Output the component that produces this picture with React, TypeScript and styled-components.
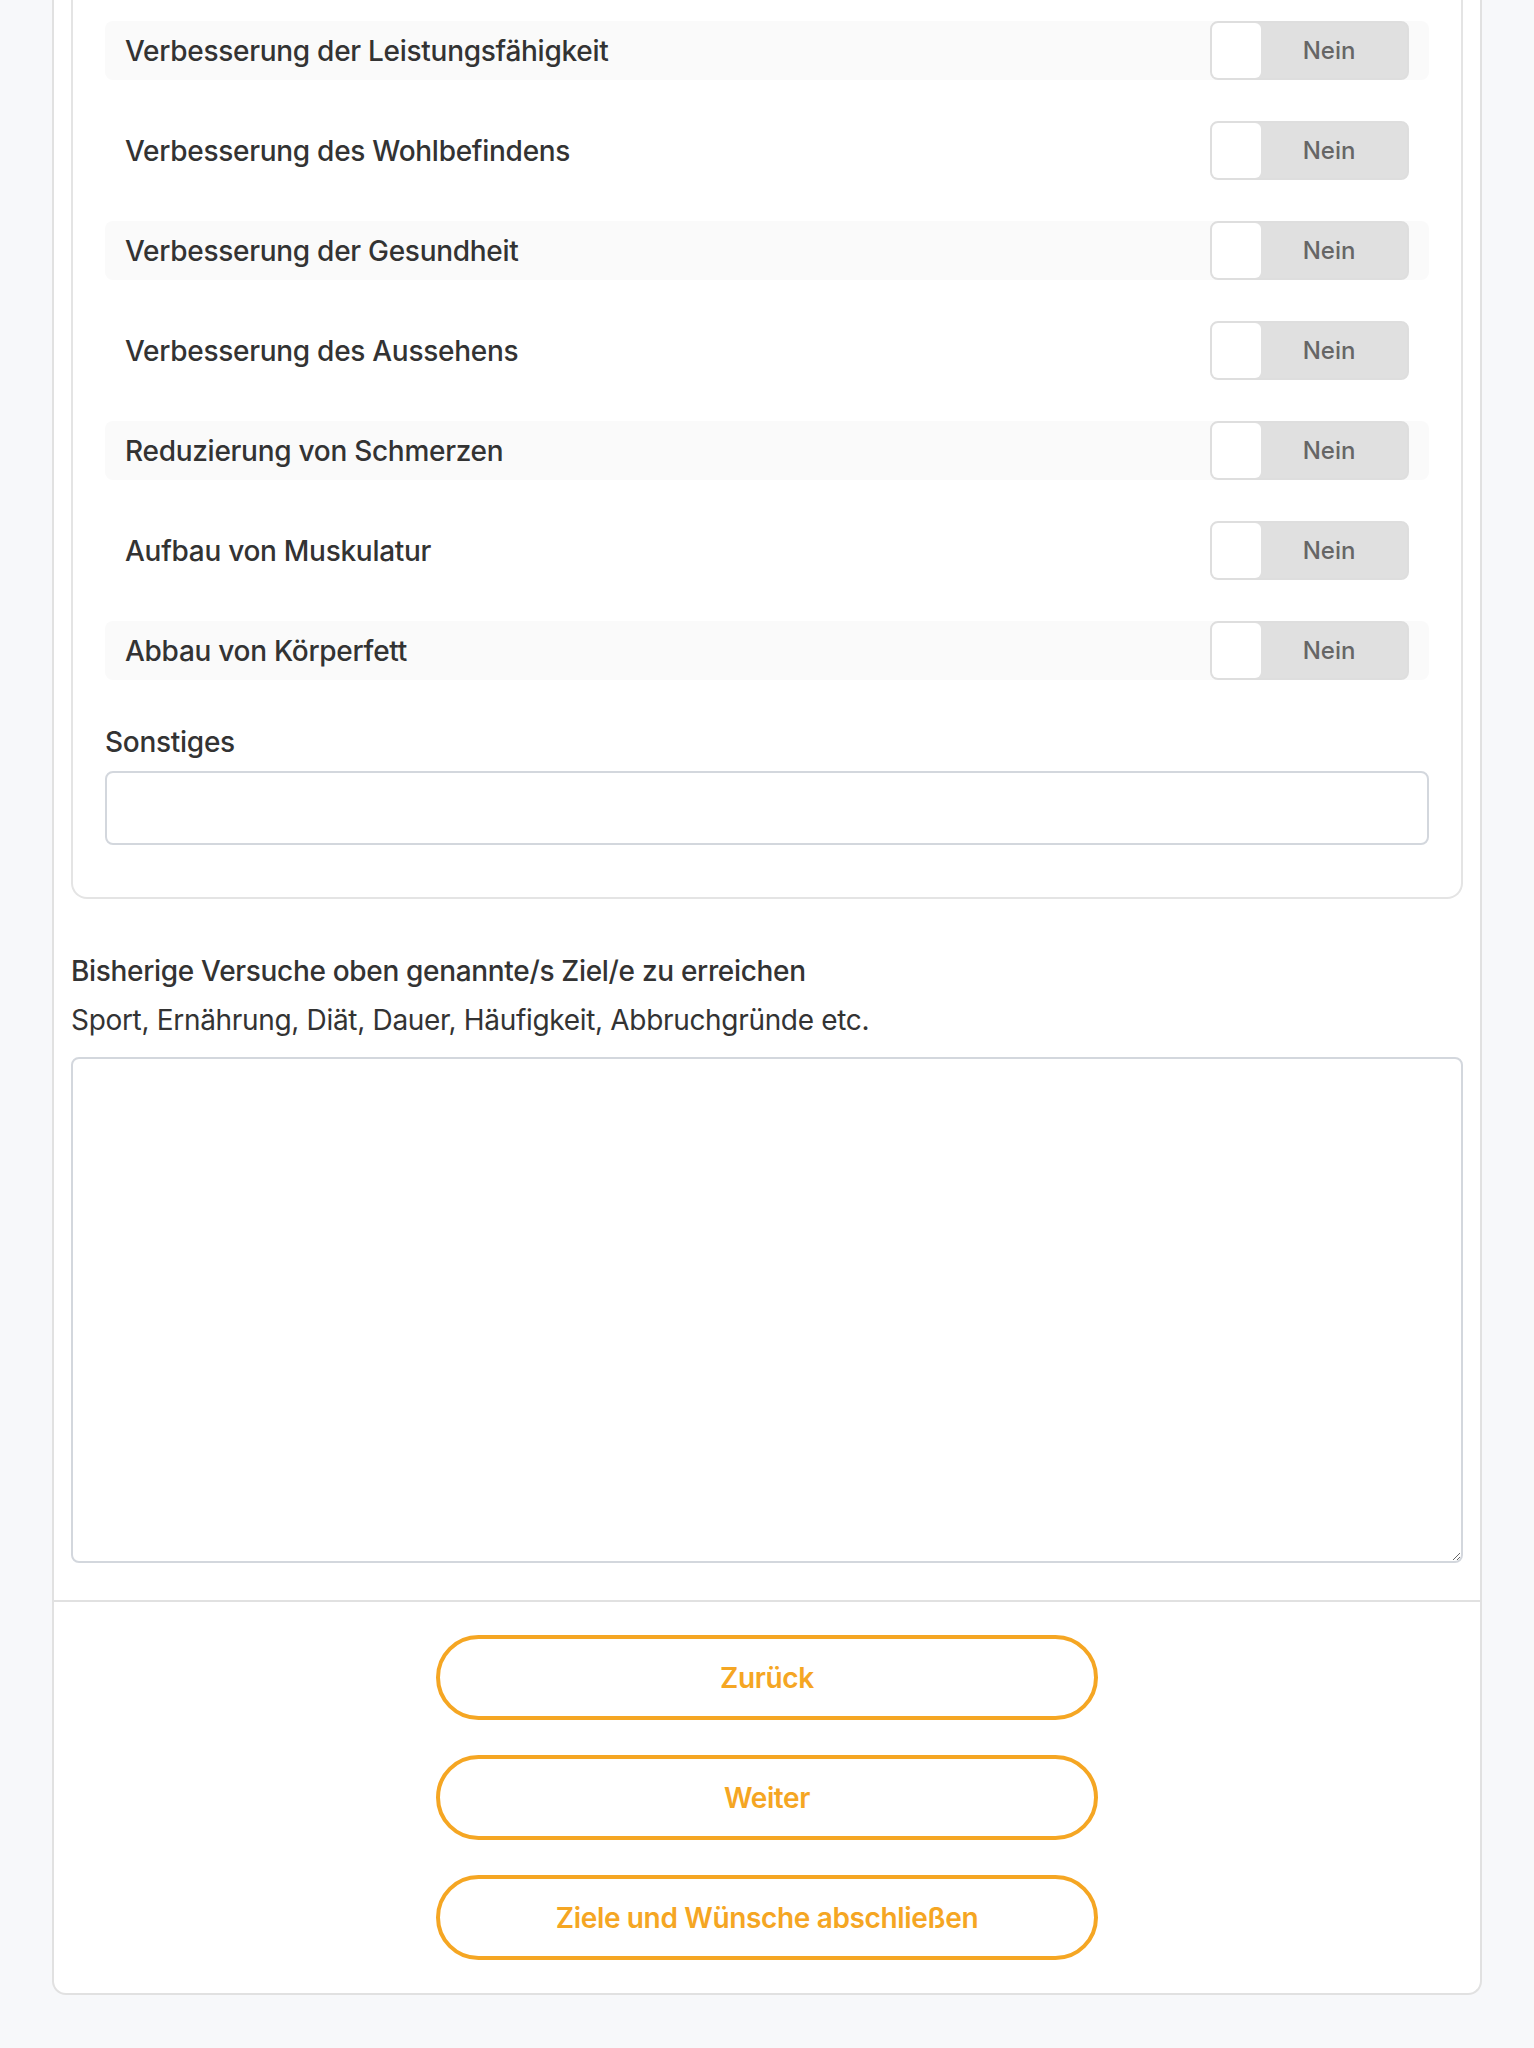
import React from 'react'
import styled, { createGlobalStyle } from 'styled-components'

interface IGoal {
  id: string
  label: string
}

const goals: IGoal[] = [
  { id: 'leistung', label: 'Verbesserung der Leistungsfähigkeit' },
  { id: 'wohlbefinden', label: 'Verbesserung des Wohlbefindens' },
  { id: 'gesundheit', label: 'Verbesserung der Gesundheit' },
  { id: 'aussehen', label: 'Verbesserung des Aussehens' },
  { id: 'schmerzen', label: 'Reduzierung von Schmerzen' },
  { id: 'muskulatur', label: 'Aufbau von Muskulatur' },
  { id: 'koerperfett', label: 'Abbau von Körperfett' }
]

const GlobalStyle = createGlobalStyle`
  * {
    box-sizing: border-box;
  }

  body {
    margin: 0;
    background: #f7f8fa;
    font-family: Inter, 'Noto Sans', 'Liberation Sans', sans-serif;
    color: #333;
  }
`

const Page = styled.div`
  padding: 0 52px 53px;
`

const Panel = styled.div`
  background: #fff;
  border: 2px solid #e1e1e1;
  border-top: none;
  border-radius: 0 0 14px 14px;
`

const PanelBody = styled.div`
  padding: 0 17px 37px;
`

const GoalsCard = styled.div`
  border: 2px solid #e4e4e4;
  border-top: none;
  border-radius: 0 0 16px 16px;
  padding: 21px 32px 52px;
`

const GoalList = styled.ul`
  display: flex;
  flex-direction: column;
  gap: 41px;
  margin: 0;
  padding: 0;
  list-style: none;
`

const GoalRow = styled.li<{ $shaded: boolean }>`
  display: flex;
  align-items: center;
  justify-content: space-between;
  height: 59px;
  padding: 0 20px;
  border-radius: 8px;
  background: ${({ $shaded }) => ($shaded ? '#fafafa' : 'transparent')};
`

const GoalLabel = styled.span`
  font-size: 28px;
  font-weight: 500;
  letter-spacing: -0.28px;
  color: #333;
`

const Toggle = styled.button`
  display: flex;
  width: 199px;
  height: 59px;
  padding: 0;
  border: 2px solid #dedede;
  border-radius: 8px;
  background: #e0e0e0;
  cursor: pointer;
  font-family: inherit;
`

const Knob = styled.span`
  width: 49px;
  height: 100%;
  border-radius: 6px;
  background: #fff;
`

const ToggleText = styled.span`
  display: flex;
  flex: 1;
  align-items: center;
  justify-content: center;
  padding-right: 10px;
  font-size: 24px;
  font-weight: 500;
  color: #666;
`

const Field = styled.div`
  display: flex;
  flex-direction: column;
  gap: 12px;
  margin-top: 45px;
`

const FieldLabel = styled.label`
  font-size: 28px;
  font-weight: 500;
  line-height: 34px;
  letter-spacing: -0.28px;
  color: #333;
`

const TextInput = styled.input`
  width: 100%;
  height: 74px;
  padding: 0 20px;
  border: 2px solid #d3d7dd;
  border-radius: 8px;
  font-family: inherit;
  font-size: 28px;
  outline: none;
`

const Attempts = styled.section`
  display: flex;
  flex-direction: column;
  margin-top: 55px;
`

const AttemptsTitle = styled.h3`
  margin: 0;
  font-size: 28px;
  font-weight: 500;
  line-height: 34px;
  letter-spacing: -0.32px;
  color: #333;
`

const AttemptsHint = styled.p`
  margin: 15px 0 20px;
  font-size: 28px;
  font-weight: 400;
  line-height: 34px;
  letter-spacing: -0.32px;
  color: #333;
`

const TextArea = styled.textarea`
  width: 100%;
  height: 506px;
  padding: 16px 20px;
  border: 2px solid #d3d7dd;
  border-radius: 8px;
  font-family: inherit;
  font-size: 28px;
  outline: none;
`

const Footer = styled.div`
  display: flex;
  flex-direction: column;
  align-items: center;
  gap: 35px;
  padding: 33px 0;
  border-top: 2px solid #e1e1e1;
`

const OutlineButton = styled.button`
  width: 662px;
  height: 85px;
  border: 4px solid #f5a623;
  border-radius: 43px;
  background: #fff;
  color: #f5a623;
  font-family: inherit;
  font-size: 28px;
  font-weight: 600;
  letter-spacing: -0.35px;
  cursor: pointer;
`

const GoalToggle: React.FC = () => (
  <Toggle type="button">
    <Knob />
    <ToggleText>Nein</ToggleText>
  </Toggle>
)

const App: React.FC = () => {
  return (
    <>
      <GlobalStyle />
      <Page>
        <Panel>
          <PanelBody>
            <GoalsCard>
              <GoalList>
                {goals.map((goal, index) => (
                  <GoalRow key={goal.id} $shaded={index % 2 === 0}>
                    <GoalLabel>{goal.label}</GoalLabel>
                    <GoalToggle />
                  </GoalRow>
                ))}
              </GoalList>

              {/* Freitext für weitere Ziele */}
              <Field>
                <FieldLabel htmlFor="sonstiges">Sonstiges</FieldLabel>
                <TextInput id="sonstiges" type="text" />
              </Field>
            </GoalsCard>

            <Attempts>
              <AttemptsTitle>Bisherige Versuche oben genannte/s Ziel/e zu erreichen</AttemptsTitle>
              <AttemptsHint>Sport, Ernährung, Diät, Dauer, Häufigkeit, Abbruchgründe etc.</AttemptsHint>
              <TextArea />
            </Attempts>
          </PanelBody>

          <Footer>
            <OutlineButton type="button">Zurück</OutlineButton>
            <OutlineButton type="button">Weiter</OutlineButton>
            <OutlineButton type="button">Ziele und Wünsche abschließen</OutlineButton>
          </Footer>
        </Panel>
      </Page>
    </>
  )
}

export default App
